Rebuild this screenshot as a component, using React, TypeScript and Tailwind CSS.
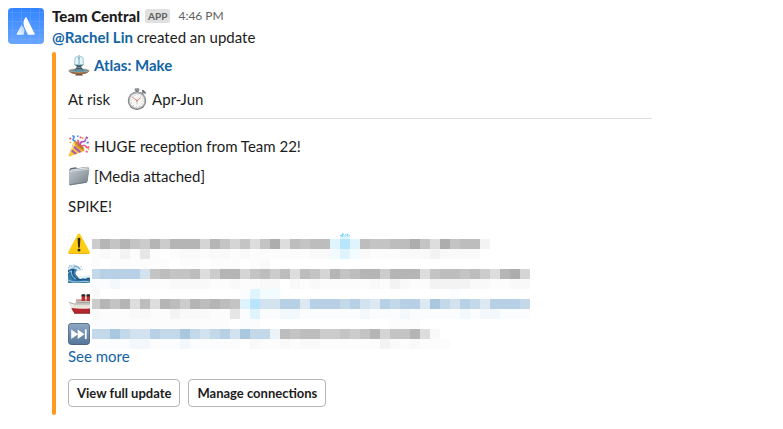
import type { ReactNode } from 'react'

interface HiddenLine {
  icon: ReactNode
  top: string
  main: string
  bottom: string
}

// one letter per redacted block
const tones: Record<string, string> = {
  a: 'bg-[#adadad]',
  b: 'bg-[#b5b5b5]',
  c: 'bg-[#bdbdbd]',
  d: 'bg-[#c4c4c4]',
  e: 'bg-[#cccccc]',
  f: 'bg-[#d5d5d5]',
  g: 'bg-[#dddddd]',
  h: 'bg-[#e6e6e6]',
  i: 'bg-[#f3f3f3]',
  j: 'bg-[#f9f9f9]',
  k: 'bg-[#fcfcfc]',
  A: 'bg-[#a9c7de]',
  B: 'bg-[#b7d0e6]',
  C: 'bg-[#c3d8e9]',
  D: 'bg-[#d2e2ee]',
  E: 'bg-[#dce8f2]',
  F: 'bg-[#edf2f6]',
  G: 'bg-[#f3f8fc]',
  H: 'bg-[#fafcfe]',
  s: 'bg-[#b8e5fb]',
  t: 'bg-[#e0f4fd]',
  u: 'bg-[#f2fbfe]',
  '.': 'bg-white',
}

function Emoji({ label, children }: { label: string; children: ReactNode }) {
  return (
    <svg viewBox="0 0 22 22" role="img" aria-label={label} className="h-[22px] w-[22px] shrink-0">
      {children}
    </svg>
  )
}

function Fountain() {
  return (
    <Emoji label="fountain">
      <path d="M.3 16.4Q2 19.4 8 20.2l-1 1.2h8l-1-1.2Q20 19.4 21.7 16.4Z" fill="#6b4026" />
      <ellipse cx="11" cy="16.5" rx="10.7" ry="2.2" fill="#c9ad90" />
      <ellipse cx="11" cy="16.5" rx="9.3" ry="1.5" fill="#5d97ad" />
      <path d="M2 18.2Q6 19.9 11 19.9T20 18.2" stroke="#b58258" strokeWidth=".8" fill="none" />
      <path
        d="M6.7 11.5V6.4Q6.9 2.6 9 2.4q1.6 0 2 2.6.4-2.6 2-2.6 2.1.2 2.3 4v5.1Z"
        fill="#e4f4f7"
      />
      <path
        d="M6.7 11V6.4Q6.9 2.6 9 2.4q1.6 0 2 2.6.4-2.6 2-2.6 2.1.2 2.3 4V11"
        fill="none"
        stroke="#86bccb"
        strokeWidth=".8"
      />
      <path d="M11 1v9" stroke="#6fa9bb" strokeWidth="1" />
      <path d="M6.3 10.8h9.4l-2.5 1.8.4 1.2 2 2.4H6.4l2-2.4.4-1.2Z" fill="#3a5360" />
      <path d="M6.8 10.8h8.4" stroke="#9cc3cd" strokeWidth=".9" />
      <path d="M9.3 13.6h3.4M8 15.8h6" stroke="#8fb4c0" strokeWidth=".8" />
    </Emoji>
  )
}

function Stopwatch() {
  return (
    <Emoji label="stopwatch">
      <rect x="9.5" y="2" width="3" height="4" fill="#747779" />
      <rect x="8.6" y=".3" width="4.8" height="2.6" rx="1" fill="#8a8e90" />
      <path d="m16 5.5 1.8-1.7" stroke="#85898b" strokeWidth="2" />
      <path d="m16.8 2.6 2.4 2.4" stroke="#686c6f" strokeWidth="1.7" strokeLinecap="round" />
      <circle cx="11" cy="12.7" r="9.2" fill="#6f7375" />
      <circle cx="11" cy="12.4" r="8.6" fill="#a9adaf" />
      <circle cx="11" cy="12.7" r="7.3" fill="#f8f7f3" />
      <circle
        cx="11"
        cy="12.7"
        r="6"
        fill="none"
        stroke="#9b9b98"
        strokeWidth="1.1"
        strokeDasharray=".6 2.54"
      />
      <path d="m6.3 9 4.7 3.7 3.6-3" stroke="#d37b68" strokeWidth=".9" fill="none" />
      <path d="M11 12.7v3.6" stroke="#b6a196" strokeWidth=".6" />
      <circle cx="11" cy="12.7" r=".9" fill="#b78372" />
    </Emoji>
  )
}

function PartyPopper() {
  return (
    <Emoji label="party popper">
      <path d="M6 6.6.6 20.4q-.3 1.5 1.2 1.1L16.4 16Q14.8 8 6 6.6Z" fill="#fbc634" />
      <path d="m5 9.2 8.6 7.7-2.4.9L4 11.6ZM3.2 13.8l6 4.8-2.2.8-4.7-3.6Z" fill="#a85bb8" />
      <path d="m6 6.6-4.4 12L3.5 16 7.7 8.5Z" fill="#ffe27c" />
      <ellipse cx="11.3" cy="11" rx="2.6" ry="6.7" transform="rotate(-45 11.3 11)" fill="#e3a02c" />
      <ellipse cx="11.7" cy="10.6" rx="1.4" ry="4.8" transform="rotate(-45 11.7 10.6)" fill="#b9762b" />
      <path d="M9.2 9.4Q12 7.5 9.4 4.8" stroke="#f0568a" strokeWidth="1.6" fill="none" />
      <path d="M12 10.2q.1-3.5 3-3.5t2.4-3" stroke="#b05cc0" strokeWidth="1.7" fill="none" />
      <path d="M13.5 11.6q3-2.5 4.3-.2t3.4.2" stroke="#f4577f" strokeWidth="1.6" fill="none" />
      <path d="M4.1 1q3.3-.3 1.5 2.3T7.7 6" stroke="#3f93ea" strokeWidth="1.6" fill="none" />
      <path d="m12 1.2 1.8.7-.7 1.7-1.8-.6Z" fill="#f4517a" />
      <path d="m18.3 1.2 2 1.3-1.1 1.8-1.9-1.2Z" fill="#a650ba" />
      <path d="m1 3.2 1.7-.9 1 1.6-1.8.9ZM18 15.4l1.9.6-.5 1.9-2-.8Z" fill="#f4577f" />
      <path d="m18.3 7 2.1-.7.6 1.8-2.1.6ZM9 .4l1.5-.1v1.8H9Z" fill="#3f93ea" />
      <path d="m14.3 4 .9-2M20 13.5l1.2 1.2M1.5 7.5l1.7-.2" stroke="#f4a91e" strokeWidth="1.3" />
    </Emoji>
  )
}

function Folder() {
  return (
    <Emoji label="file folder">
      <defs>
        <linearGradient id="folder-face" x1="0" y1="0" x2="1" y2="1">
          <stop stopColor="#c3cace" />
          <stop offset=".55" stopColor="#98a2a9" />
          <stop offset="1" stopColor="#6c7983" />
        </linearGradient>
      </defs>
      <path d="M1.4 4.5 2.8 3l5-.8 1.5 1 10.4-1.5 1.1 1.2-1.3 12.5L2 19.4Z" fill="#5b6870" />
      <path d="m2.8 4.6 17-2.5-.6 12L3 18Z" fill="#e6e9ea" />
      <path d="m1 6.3 1-1 18.6-2.1.8 1-1.9 12.6-1 .9L2 20.4l-1-1Z" fill="url(#folder-face)" />
      <path d="m1.3 6.5 19.6-2.3" stroke="#dbe0e2" strokeWidth=".8" />
      <path d="m1.4 19.8 17.1-2.6" stroke="#687680" strokeWidth=".8" />
    </Emoji>
  )
}

function Warning() {
  return (
    <Emoji label="warning">
      <path
        d="M9.6 1.6q1.4-2 2.8 0L21.7 18.8q.8 1.9-1.3 1.9H1.6q-2.1 0-1.3-1.9Z"
        fill="#ffcc16"
      />
      <path d="M.6 20q.4.7 1.2.7h18.4q.8 0 1.2-.7Z" fill="#e9a70d" />
      <path d="M9.6 5.9q0-1.1 1.4-1.1t1.4 1.1l-.5 8q-.1.9-.9.9t-.9-.9Z" fill="#30281d" />
      <circle cx="11" cy="17" r="1.5" fill="#30281d" />
    </Emoji>
  )
}

function Wave() {
  return (
    <Emoji label="water wave">
      <path
        d="M0 4.6Q3.6 1.4 8 2.4q4.6 1.2 4.9 5.2-2.6-1.4-4.4.1-1.8 1.8-.4 4.4 1.8 3 6 2.6 4.2-.6 7.9-1.6v6.8H0Z"
        fill="#3a7fae"
      />
      <path d="M.4 9q2-2.4 5-2.6-1.6 3.6.2 6.8 2.2 3.6 8 3.4l8.4-1.2" fill="none" stroke="#1b5587" strokeWidth="1.7" />
      <path d="M0 12.4q1.2-1.8 2.6-2.4.2 6.4 7.4 8.4 5 1 12-.8" fill="none" stroke="#2b6d9e" strokeWidth="1.4" />
      <path d="M0 10q1.6-1.8 3.4-2.2-.4 5.8 4.6 8.4" fill="none" stroke="#9cc8dc" strokeWidth="1" />
      <path
        d="m0 5 1.8-2 1.8.2 1.4-1.6 1.8 1 2-.6 1 1.4 2 .6-.2 1.4 1.6 1-.4 1.8-2.2-1-1.6.6-.6-1.6-2-.4-1.8-.2-1.6.2-1.4 1L0 6.8Z"
        fill="#cfe3ee"
      />
      <path d="m5.4 4.2 2.4-.8 2.6 1 1.4 1.8" fill="none" stroke="#4b88b2" strokeWidth=".8" />
      <path
        d="m10.2 14 2.4-1 2 .8 2.2-1.6 2.2.8 1.4-1.2 1.6.6v2.4l-2.2-.2-2.2 1.2-2.6-.6-2.2.8-2.4-.8Z"
        fill="#e3eef3"
      />
      <path d="M0 17q5 3 10.8 1.9T22 19.1" fill="none" stroke="#b7d5e4" strokeWidth=".9" />
      <path d="m1.4 3 .8-1.2M6 1.6l.4-.8M12.6 3.8h.9M13.8 6.6h.8" stroke="#6aa5c2" strokeWidth=".8" />
    </Emoji>
  )
}

function Ship() {
  return (
    <Emoji label="passenger ship">
      <path d="M7.4 9.6 8.6 7H22v5H7Z" fill="#dedbd3" />
      <path d="M8.2 9.2H22" stroke="#8e8782" strokeWidth=".9" />
      <path d="M8 7h14" stroke="#a63a36" strokeWidth=".8" />
      <rect x="13.6" y="2" width="3.6" height="6" fill="#c0302f" />
      <rect x="18.6" y="2" width="3.4" height="6" fill="#c0302f" />
      <path d="M13.6 1.2h3.6v2.2h-3.6zM18.6 1.2H22v2.2h-3.4z" fill="#26282b" />
      <path d="M.8 9.4 6.4 11H22v5.4H4.2Q2 13 .8 9.4Z" fill="#ece8df" />
      <path d="M.8 9.4 6.4 11H22" stroke="#8f8b86" strokeWidth=".7" fill="none" />
      <path d="M3.4 15Q12 16.4 22 15.4v5H6.6Q4.4 18.4 3.4 15Z" fill="#b3262d" />
      <path d="M7 13h15" stroke="#c3bfb8" strokeWidth=".6" strokeDasharray="1 1" />
      <path d="M6 20.2h16" stroke="#7e2024" strokeWidth=".8" />
    </Emoji>
  )
}

function NextTrack() {
  return (
    <Emoji label="next track">
      <defs>
        <linearGradient id="next-face" x1="0" y1="0" x2="0" y2="1">
          <stop stopColor="#8ea8c2" />
          <stop offset="1" stopColor="#56779b" />
        </linearGradient>
      </defs>
      <rect width="22" height="22" rx="4" fill="#4b6483" />
      <rect x=".7" y=".7" width="20.6" height="20.3" rx="3.5" fill="url(#next-face)" />
      <path d="m3.2 6.4 6.8 4.8-6.8 4.8ZM9.7 6.4l6.8 4.8-6.8 4.8Z" fill="#fff" />
      <rect x="16.9" y="6.4" width="1.7" height="9.6" fill="#fff" />
    </Emoji>
  )
}

function AtlasLogo() {
  return (
    <svg viewBox="0 0 36 36" role="img" aria-label="Team Central" className="h-9 w-9 shrink-0 rounded">
      <defs>
        <linearGradient id="logo-bg" x1="0" y1="0" x2="0" y2="1">
          <stop stopColor="#3184ff" />
          <stop offset="1" stopColor="#69a5ff" />
        </linearGradient>
        <linearGradient id="logo-left" x1="1" y1="0" x2="0" y2="1">
          <stop stopColor="#a7caff" />
          <stop offset="1" stopColor="#fff" />
        </linearGradient>
      </defs>
      <rect width="36" height="36" fill="url(#logo-bg)" />
      <path
        d="M4.5 0v36M13.5 0v36M22.5 0v36M31.5 0v36M0 4.5h36M0 13.5h36M0 22.5h36M0 31.5h36"
        stroke="#82b4ff"
        strokeOpacity=".45"
        strokeWidth=".6"
      />
      <path d="M13.3 17.3q.5-.5.9.2 3.4 4.2 1.5 9.2H9.3q-.9 0-.5-.9Z" fill="url(#logo-left)" />
      <path
        d="M17.4 9.5q.6-.9 1.1 0l8.2 16.2q.4 1-.6 1h-5.6q-.7 0-1-.7l-3.4-7.6q-1.7-4.5 1.3-8.9Z"
        fill="#fff"
      />
    </svg>
  )
}

const hiddenLines: HiddenLine[] = [
  {
    icon: <Warning />,
    top: '',
    main: 'ebdbdebebbbfbdfdgdagcdcctstcddccadgadcci',
    bottom: 'kjkikhk.kjjkjjkjkkkkkkjjutujkkkjjjijjjj.',
  },
  {
    icon: <Wave />,
    top: 'k.kkkkkk.kk.kkk.kj......................',
    main: 'CBBBBDdcddcgebbfdcecgcdfbdcbbebbbgdccdcegbaf',
    bottom: 'HHGHHHkkjjjjkkjkkjj.jkjkkkkkjkijkkiiiijjkkjj',
  },
  {
    icon: <Ship />,
    top: 'j..............Htuu.................H.......',
    main: 'ebdbgcgbcebcbcdtsDDBBEBBBCBDEBCBBEACDBCEBBBC',
    bottom: 'jkkkjjkkijjjkkhHtHkGGHHHHHHGHHHGHHHHHGHGGHHH',
  },
  {
    icon: <NextTrack />,
    top: 'HHkkkkkkkkkkkk.HH.............kkk',
    main: 'CCACDDBCCACDCBDACCFcdcceededbfddbgj',
    bottom: 'kHHHGGkHHGHHHHk.jkkjkjjkkkkkkijkjkkk',
  },
]

function Blocks({ cells, className }: { cells: string; className: string }) {
  return (
    <div className={`flex ${className}`}>
      {cells.split('').map((cell, index) => (
        <span key={index} className={`shrink-0 ${index === 0 ? 'w-2' : 'w-2.5'} ${tones[cell]}`} />
      ))}
    </div>
  )
}

// tip of a blue glyph that sticks out above the first line's blocks
function Spark() {
  return (
    <svg viewBox="0 0 10 6" className="absolute top-1 left-[248px] h-1.5 w-2.5" aria-hidden="true">
      <path d="M0 3h10v3H0Z" fill="#e0f4fd" />
      <path d="M0 2.5h2M2 .5h1v3H2ZM3 1.5h1M4 3h2M5 1.5h1M7 1h1v2H7ZM9 2.5h1" stroke="#8ed6f8" fill="#8ed6f8" />
    </svg>
  )
}

export default function App() {
  return (
    <main className="flex min-h-screen items-start gap-2 bg-white p-2 pt-1.5 font-['Lato',sans-serif] text-[15px] leading-[22px] text-[#1d1c1d]">
      <div className="pt-0.5">
        <AtlasLogo />
      </div>

      <div className="min-w-0 flex-1">
        <header className="flex items-center leading-5">
          <h1 className="font-black">Team Central</h1>
          <span className="ml-[5px] rounded-xs bg-[#e0e0e0] px-[3px] text-[10px] leading-[14px] font-bold text-[#616061]">
            APP
          </span>
          <time className="ml-2 text-xs leading-5 text-[#616061]">4:46 PM</time>
        </header>
        <p>
          <a href="#rachel-lin" className="font-bold text-[#1264a3]">
            @Rachel Lin
          </a>{' '}
          created an update
        </p>

        <article className="mt-1 flex max-w-[600px] gap-3">
          <div className="w-1 shrink-0 rounded-full bg-[#ff991f]" />
          <div className="min-w-0 flex-1 pt-0.5 pb-2">
            <div className="flex items-center gap-1">
              <Fountain />
              <a href="#atlas-make" className="font-bold text-[#1264a3]">
                Atlas: Make
              </a>
            </div>

            <div className="mt-3 flex items-center border-b border-[#dddddd] pb-2">
              <span>At risk</span>
              <span className="ml-4 flex items-center gap-1">
                <Stopwatch />
                Apr-Jun
              </span>
            </div>

            <div className="mt-4 flex flex-col gap-2">
              <p className="flex items-center gap-1">
                <PartyPopper />
                HUGE reception from Team 22!
              </p>
              <p className="flex items-center gap-1">
                <Folder />
                [Media attached]
              </p>
              <p>SPIKE!</p>
            </div>

            {/* Redacted lines */}
            <div className="mt-3">
              {hiddenLines.map((line, index) => (
                <div key={index} className="flex h-[30px] items-center gap-0.5">
                  {line.icon}
                  <div aria-hidden="true" className="relative min-w-0 overflow-hidden">
                    <Blocks cells={line.top} className="h-2.5" />
                    <Blocks cells={line.main} className="h-2.5" />
                    <Blocks cells={line.bottom} className="h-2.5" />
                    {index === 0 && <Spark />}
                  </div>
                </div>
              ))}
            </div>

            <button type="button" className="-mt-1 block text-[#1264a3]">
              See more
            </button>

            <div className="mt-3 flex flex-wrap gap-2">
              <button
                type="button"
                className="rounded border border-[#b5b5b5] px-2 text-[13px] leading-[26px] font-bold"
              >
                View full update
              </button>
              <button
                type="button"
                className="rounded border border-[#b5b5b5] px-2 text-[13px] leading-[26px] font-bold"
              >
                Manage connections
              </button>
            </div>
          </div>
        </article>
      </div>
    </main>
  )
}
